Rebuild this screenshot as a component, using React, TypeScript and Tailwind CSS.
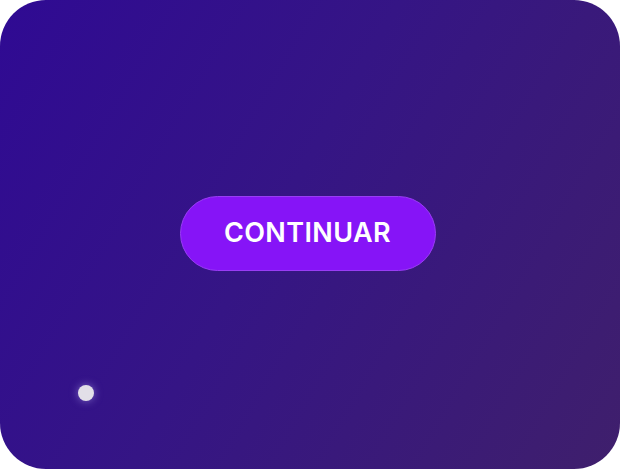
export default function App() {
  return (
    <div className="w-[620px] h-[469px] bg-white">
      <div className="relative w-full h-full rounded-[46px] overflow-hidden bg-[linear-gradient(120deg,#2f0a93_0%,#351585_45%,#3f1f6c_100%)] flex items-center justify-center">
        <button className="w-[256px] h-[75px] -mt-[2px] -ml-[5px] rounded-full bg-[#8614f7] text-white text-[27px] font-semibold tracking-[0.4px] font-['Inter',sans-serif] border border-[#9a3cf5]">
          CONTINUAR
        </button>
        <div className="absolute left-[78px] top-[385px] w-4 h-4 rounded-full bg-[#e2dfe8] shadow-[0_0_8px_rgba(200,190,255,0.5)]" />
      </div>
    </div>
  );
}
